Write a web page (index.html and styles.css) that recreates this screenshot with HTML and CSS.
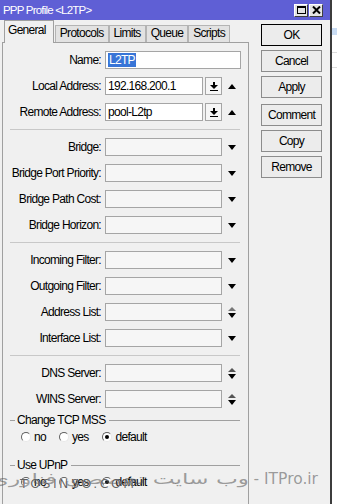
FILE: index.html
```html
<!DOCTYPE html>
<html>
<head>
<meta charset="utf-8">
<link rel="stylesheet" href="styles.css">
</head>
<body>
<div class="screen">
  <div class="window">
    <div class="titlebar">
      <span class="title">PPP Profile &lt;L2TP&gt;</span>
      <div class="tb-buttons">
        <span class="tb-btn"><svg width="9" height="8" viewBox="0 0 9 8"><rect x="0.5" y="0.5" width="8" height="7" fill="none" stroke="#000"/><rect x="0" y="0" width="9" height="2" fill="#000"/></svg></span>
        <span class="tb-btn"><svg width="9" height="8" viewBox="0 0 9 8"><path d="M1 0.5 L8 7.5 M8 0.5 L1 7.5" stroke="#000" stroke-width="2"/></svg></span>
      </div>
    </div>
    <div class="content">
      <div class="left">
        <div class="tabs">
          <div class="tab active">General</div>
          <div class="tab">Protocols</div>
          <div class="tab">Limits</div>
          <div class="tab">Queue</div>
          <div class="tab">Scripts</div>
        </div>
        <div class="panel">
          <div class="row">
            <span class="lbl">Name:</span>
            <div class="ctl"><div class="field white"><span class="sel">L2TP</span></div></div>
          </div>
          <div class="row">
            <span class="lbl">Local Address:</span>
            <div class="ctl">
              <div class="field white">192.168.200.1</div>
              <div class="dd"><svg width="8" height="9" viewBox="0 0 8 9"><rect x="3" y="0" width="2" height="3" fill="#000"/><polygon points="0,3 8,3 4,7" fill="#000"/><rect x="0" y="8" width="8" height="1" fill="#000"/></svg></div>
              <div class="arrow"><svg width="8" height="5" viewBox="0 0 8 5"><polygon points="0,5 8,5 4,0" fill="#000"/></svg></div>
            </div>
          </div>
          <div class="row">
            <span class="lbl">Remote Address:</span>
            <div class="ctl">
              <div class="field white">pool-L2tp</div>
              <div class="dd"><svg width="8" height="9" viewBox="0 0 8 9"><rect x="3" y="0" width="2" height="3" fill="#000"/><polygon points="0,3 8,3 4,7" fill="#000"/><rect x="0" y="8" width="8" height="1" fill="#000"/></svg></div>
              <div class="arrow"><svg width="8" height="5" viewBox="0 0 8 5"><polygon points="0,5 8,5 4,0" fill="#000"/></svg></div>
            </div>
          </div>
          <div class="sep"></div>
          <div class="row">
            <span class="lbl">Bridge:</span>
            <div class="ctl"><div class="field"></div><div class="arrow"><svg width="8" height="5" viewBox="0 0 8 5"><polygon points="0,0 8,0 4,5" fill="#000"/></svg></div></div>
          </div>
          <div class="row">
            <span class="lbl">Bridge Port Priority:</span>
            <div class="ctl"><div class="field"></div><div class="arrow"><svg width="8" height="5" viewBox="0 0 8 5"><polygon points="0,0 8,0 4,5" fill="#000"/></svg></div></div>
          </div>
          <div class="row">
            <span class="lbl">Bridge Path Cost:</span>
            <div class="ctl"><div class="field"></div><div class="arrow"><svg width="8" height="5" viewBox="0 0 8 5"><polygon points="0,0 8,0 4,5" fill="#000"/></svg></div></div>
          </div>
          <div class="row">
            <span class="lbl">Bridge Horizon:</span>
            <div class="ctl"><div class="field"></div><div class="arrow"><svg width="8" height="5" viewBox="0 0 8 5"><polygon points="0,0 8,0 4,5" fill="#000"/></svg></div></div>
          </div>
          <div class="sep"></div>
          <div class="row">
            <span class="lbl">Incoming Filter:</span>
            <div class="ctl"><div class="field"></div><div class="arrow"><svg width="8" height="5" viewBox="0 0 8 5"><polygon points="0,0 8,0 4,5" fill="#000"/></svg></div></div>
          </div>
          <div class="row">
            <span class="lbl">Outgoing Filter:</span>
            <div class="ctl"><div class="field"></div><div class="arrow"><svg width="8" height="5" viewBox="0 0 8 5"><polygon points="0,0 8,0 4,5" fill="#000"/></svg></div></div>
          </div>
          <div class="row">
            <span class="lbl">Address List:</span>
            <div class="ctl"><div class="field"></div><div class="arrow"><svg width="8" height="11" viewBox="0 0 8 11"><polygon points="0,4 8,4 4,0" fill="#777"/><polygon points="0,6 8,6 4,11" fill="#000"/></svg></div></div>
          </div>
          <div class="row">
            <span class="lbl">Interface List:</span>
            <div class="ctl"><div class="field"></div><div class="arrow"><svg width="8" height="5" viewBox="0 0 8 5"><polygon points="0,0 8,0 4,5" fill="#000"/></svg></div></div>
          </div>
          <div class="sep"></div>
          <div class="row">
            <span class="lbl">DNS Server:</span>
            <div class="ctl"><div class="field"></div><div class="arrow"><svg width="8" height="11" viewBox="0 0 8 11"><polygon points="0,4 8,4 4,0" fill="#555"/><polygon points="0,6 8,6 4,11" fill="#000"/></svg></div></div>
          </div>
          <div class="row last">
            <span class="lbl">WINS Server:</span>
            <div class="ctl"><div class="field"></div><div class="arrow"><svg width="8" height="11" viewBox="0 0 8 11"><polygon points="0,4 8,4 4,0" fill="#555"/><polygon points="0,6 8,6 4,11" fill="#000"/></svg></div></div>
          </div>
          <div class="group"><span class="gtext">Change TCP MSS</span></div>
          <div class="radios">
            <span class="radio"><span class="dot"></span>no</span>
            <span class="radio"><span class="dot"></span>yes</span>
            <span class="radio"><span class="dot on"></span>default</span>
          </div>
          <div class="group g2"><span class="gtext">Use UPnP</span></div>
          <div class="radios">
            <span class="radio"><span class="dot"></span>no</span>
            <span class="radio"><span class="dot"></span>yes</span>
            <span class="radio"><span class="dot on"></span>default</span>
          </div>
        </div>
      </div>
      <div class="actions">
        <div class="btn default">OK</div>
        <div class="btn">Cancel</div>
        <div class="btn">Apply</div>
        <div class="btn gap">Comment</div>
        <div class="btn">Copy</div>
        <div class="btn">Remove</div>
      </div>
    </div>
  </div>
  <div class="behind">
    <div class="b-top"></div>
    <div class="b-strip"></div>
    <div class="b-line"></div>
    <div class="b-line"></div>
  </div>
  <div class="wm-fa"><span class="wm-ar">وب سایت تخصصی فناوری اطلاعات</span> - ITPro.ir</div>
  <div class="wm-en">TOSINSO.COM</div>
</div>
</body>
</html>
```

FILE: styles.css
```css
* { box-sizing: border-box; }
body {
  margin: 0;
  font-family: "Liberation Sans", Arial, sans-serif;
  font-size: 12px;
  letter-spacing: -0.7px;
  color: #000;
}
.screen {
  width: 337px;
  height: 504px;
  position: relative;
  overflow: hidden;
  display: flex;
  background: #fff;
}
.window {
  width: 332px;
  height: 504px;
  border-right: 2px solid #3c3c3c;
  background: #f0f0f0;
  display: flex;
  flex-direction: column;
}
.titlebar {
  height: 20px;
  flex: none;
  background: #5f5fd5;
  display: flex;
  align-items: center;
  justify-content: space-between;
  padding: 0 7px 0 3px;
  color: #fff;
  font-size: 11.5px;
  letter-spacing: -0.8px;
}
.tb-buttons { display: flex; gap: 1px; }
.tb-btn {
  width: 14px;
  height: 13px;
  background: #e4e4e4;
  border: 1px solid;
  border-color: #fff #404040 #404040 #fff;
  display: flex;
  align-items: center;
  justify-content: center;
}
.content {
  flex: 1;
  display: flex;
  padding-left: 2px;
}
.left {
  width: 247px;
  display: flex;
  flex-direction: column;
}
.tabs {
  height: 22px;
  display: flex;
  align-items: flex-end;
  padding-left: 2px;
  position: relative;
  z-index: 1;
}
.tab {
  height: 17px;
  padding: 0 4px;
  line-height: 15px;
  background: #e2e2e2;
  border: 1px solid #b4b4b4;
  border-bottom: none;
}
.tab.active {
  height: 23px;
  margin-bottom: -1px;
  margin-right: 1px;
  background: #f0f0f0;
  border-color: #a0a0a0;
  line-height: 19px;
  padding: 0 7px 0 3px;
}
.panel {
  flex: 1;
  border: 1px solid #a0a0a0;
  border-bottom: none;
  padding: 8px 0 0 0;
}
.row {
  display: flex;
  align-items: center;
  height: 18px;
  margin-bottom: 8px;
}
.row.last { margin-bottom: 5px; }
.lbl {
  width: 98px;
  text-align: right;
  margin-right: 4px;
  white-space: nowrap;
}
.ctl {
  width: 136px;
  height: 18px;
  display: flex;
}
.field {
  flex: 1;
  height: 18px;
  border: 1px solid #a5a5a5;
  background: #f6f6f6;
  padding-left: 2px;
  line-height: 16px;
  white-space: nowrap;
  overflow: hidden;
}
.field.white { background: #fff; }
.sel {
  background: #3875d7;
  color: #fff;
  padding: 0 1px;
  display: inline-block;
  line-height: 14px;
}
.dd {
  width: 17px;
  margin-left: 2px;
  border: 1px solid #a5a5a5;
  background: #f6f6f6;
  display: flex;
  align-items: center;
  justify-content: center;
}
.arrow {
  width: 19px;
  flex: none;
  display: flex;
  align-items: center;
  padding-left: 6px;
}
.sep {
  width: 230px;
  height: 1px;
  background: #c8c8c8;
  margin: 1px 0 8px 7px;
}
.group {
  height: 14px;
  display: flex;
  align-items: center;
  padding-left: 7px;
  width: 237px;
}
.group::before {
  content: "";
  width: 5px;
  height: 1px;
  background: #a0a0a0;
  margin-right: 2px;
}
.group::after {
  content: "";
  flex: 1;
  height: 1px;
  background: #a0a0a0;
  margin-left: 4px;
}
.g2 { margin-top: 14px; }
.radios {
  height: 14px;
  margin-top: 3px;
  display: flex;
  align-items: center;
  padding-left: 18px;
  gap: 13px;
}
.radio {
  display: flex;
  align-items: center;
  gap: 3px;
}
.radio:last-child { gap: 4px; }
.dot {
  width: 10px;
  height: 10px;
  border-radius: 50%;
  border: 1px solid;
  border-color: #606060 #e8e8e8 #e8e8e8 #606060;
  background: #fff;
  position: relative;
}
.dot.on::after {
  content: "";
  position: absolute;
  left: 2px;
  top: 2px;
  width: 4px;
  height: 4px;
  border-radius: 50%;
  background: #000;
}
.actions {
  width: 61px;
  margin-left: 12px;
  padding-top: 4px;
}
.btn {
  height: 22px;
  border: 1px solid #8c8c8c;
  background: #ececec;
  text-align: center;
  line-height: 20px;
  margin-bottom: 4px;
}
.btn.default { border-color: #000; }
.btn.gap { margin-top: 6px; }
.behind {
  flex: 1;
  background: #fff;
}
.b-top { height: 28px; }
.b-strip { height: 7px; background: #c9dcf3; }
.b-line { height: 1px; background: #dcdcdc; margin-top: 17px; }
.b-line + .b-line { margin-top: 14px; }
.wm-fa {
  position: absolute;
  right: 19px;
  top: 471px;
  font-family: "DejaVu Sans", sans-serif;
  font-size: 15.5px;
  line-height: 16px;
  letter-spacing: 0;
  color: rgba(80, 80, 80, 0.55);
  white-space: nowrap;
}
.wm-ar {
  display: inline-block;
  transform: scaleX(1.55);
  transform-origin: right center;
  font-size: 15px;
}
.wm-en {
  position: absolute;
  left: 20px;
  top: 477px;
  font-family: "DejaVu Sans", sans-serif;
  font-size: 12.5px;
  line-height: 14px;
  letter-spacing: 2.5px;
  color: rgba(50, 50, 50, 0.75);
  text-shadow: 0 0 1px #fff;
  white-space: nowrap;
}
```
